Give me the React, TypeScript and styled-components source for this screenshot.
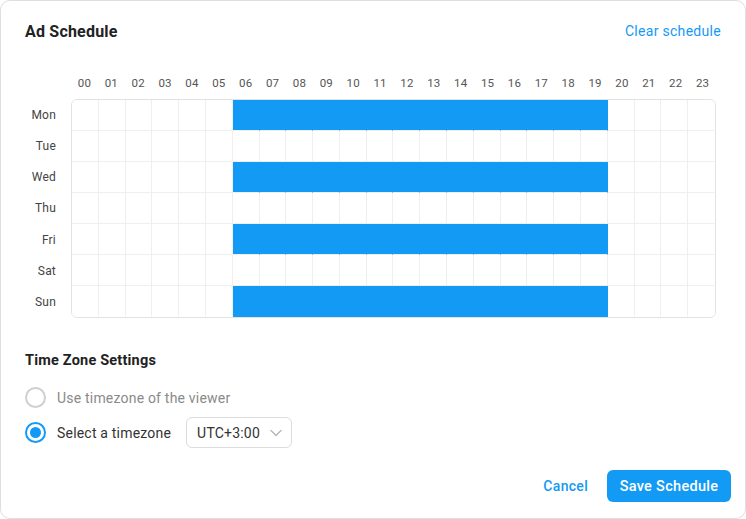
import React, {useState} from "react";
import styled, {createGlobalStyle} from "styled-components";

const GlobalStyle = createGlobalStyle`
  html, body {
    margin: 0;
    padding: 0;
    background: #ffffff;
    font-family: Roboto, "Noto Sans", Arial, sans-serif;
  }
  * { box-sizing: border-box; }
`;

const BLUE = "#139af5";

const Card = styled.div`
  width: 746px;
  height: 519px;
  border: 1px solid #dedede;
  border-radius: 10px;
  background: #fff;
  display: flex;
  flex-direction: column;
  padding: 19px 0 16px 24px;
  letter-spacing: 0.2px;
`;

const Header = styled.div`
  display: flex;
  justify-content: space-between;
  align-items: center;
  height: 22px;
  padding-right: 24px;
`;

const Title = styled.h2`
  margin: 0;
  font-size: 16px;
  font-weight: 700;
  color: #222;
  letter-spacing: 0.2px;
`;

const LinkButton = styled.button<{$bold?: boolean}>`
  border: none;
  background: none;
  padding: 0;
  font-family: inherit;
  font-size: 14px;
  letter-spacing: 0.3px;
  color: ${BLUE};
  cursor: pointer;
  font-weight: ${(p) => (p.$bold ? 500 : 400)};
`;

const Schedule = styled.div`
  margin-top: 33px;
  display: grid;
  grid-template-columns: 46px 645px;
  grid-template-rows: 16px 219px;
  row-gap: 8px;
`;

const Hours = styled.div`
  grid-column: 2;
  display: grid;
  grid-template-columns: repeat(24, 1fr);
`;

const HourLabel = styled.span`
  text-align: center;
  font-size: 11.5px;
  color: #555;
  line-height: 16px;
`;

const Days = styled.div`
  grid-column: 1;
  display: grid;
  grid-template-rows: repeat(7, 1fr);
  padding-right: 15px;
`;

const DayLabel = styled.span`
  display: flex;
  align-items: center;
  justify-content: flex-end;
  font-size: 12px;
  color: #444;
`;

const Grid = styled.div`
  grid-column: 2;
  display: grid;
  grid-template-columns: repeat(24, 1fr);
  grid-template-rows: repeat(7, 1fr);
  border: 1px solid #e2e2e2;
  border-radius: 6px;
  overflow: hidden;
`;

const Cell = styled.div<{$on: boolean; $lastCol: boolean; $lastRow: boolean}>`
  background: ${(p) => (p.$on ? BLUE : "#fff")};
  border-right: 1px solid ${(p) => (p.$lastCol ? "transparent" : p.$on ? BLUE : "#efefef")};
  border-bottom: 1px solid ${(p) => (p.$lastRow ? "transparent" : "#efefef")};
`;

const SectionTitle = styled.h3`
  margin: 34px 0 0;
  font-size: 14.5px;
  font-weight: 700;
  color: #222;
  line-height: 18px;
`;

const Options = styled.div`
  margin-top: 12px;
  display: flex;
  flex-direction: column;
  gap: 4px;
`;

const Option = styled.label<{$muted?: boolean}>`
  display: flex;
  align-items: center;
  height: 31px;
  font-size: 14px;
  color: ${(p) => (p.$muted ? "#8a8a8a" : "#333")};
  cursor: pointer;
`;

const Radio = styled.span<{$checked: boolean}>`
  width: 21px;
  height: 21px;
  border-radius: 50%;
  border: 2px solid ${(p) => (p.$checked ? BLUE : "#cfcfcf")};
  margin-right: 11px;
  display: flex;
  align-items: center;
  justify-content: center;
  &::after {
    content: "";
    width: 11px;
    height: 11px;
    border-radius: 50%;
    background: ${(p) => (p.$checked ? BLUE : "transparent")};
  }
`;

const Select = styled.div`
  margin-left: 15px;
  width: 106px;
  height: 31px;
  border: 1px solid #dcdcdc;
  border-radius: 6px;
  display: flex;
  align-items: center;
  justify-content: space-between;
  padding: 0 9px 0 10px;
  font-size: 14px;
  color: #333;
`;

const Footer = styled.div`
  margin-top: auto;
  display: flex;
  justify-content: flex-end;
  align-items: center;
  gap: 19px;
  padding-right: 14px;
`;

const PrimaryButton = styled.button`
  height: 32px;
  width: 124px;
  padding: 0;
  border: none;
  border-radius: 6px;
  background: ${BLUE};
  color: #fff;
  font-family: inherit;
  font-size: 14.5px;
  letter-spacing: 0.3px;
  font-weight: 500;
  cursor: pointer;
`;

const days = ["Mon", "Tue", "Wed", "Thu", "Fri", "Sat", "Sun"];
const hours = Array.from({length: 24}, (_, i) => String(i).padStart(2, "0"));

const initial = days.map((_, d) =>
    hours.map((_, h) => d % 2 === 0 && h >= 6 && h <= 19)
);

function App() {
    const [sel, setSel] = useState<boolean[][]>(initial);
    const [useViewer, setUseViewer] = useState(false);

    const toggle = (d: number, h: number) =>
        setSel((prev) => prev.map((row, i) => (i === d ? row.map((v, j) => (j === h ? !v : v)) : row)));

    return (
        <>
            <GlobalStyle/>
            <Card>
                <Header>
                    <Title>Ad Schedule</Title>
                    <LinkButton onClick={() => setSel(days.map(() => hours.map(() => false)))}>
                        Clear schedule
                    </LinkButton>
                </Header>
                <Schedule>
                    <Hours>
                        {hours.map((h) => <HourLabel key={h}>{h}</HourLabel>)}
                    </Hours>
                    <Days>
                        {days.map((d) => <DayLabel key={d}>{d}</DayLabel>)}
                    </Days>
                    <Grid>
                        {sel.map((row, d) =>
                            row.map((on, h) => (
                                <Cell
                                    key={`${d}-${h}`}
                                    $on={on}
                                    $lastCol={h === 23}
                                    $lastRow={d === 6}
                                    onClick={() => toggle(d, h)}
                                />
                            ))
                        )}
                    </Grid>
                </Schedule>
                <SectionTitle>Time Zone Settings</SectionTitle>
                <Options>
                    <Option $muted onClick={() => setUseViewer(true)}>
                        <Radio $checked={useViewer}/>
                        Use timezone of the viewer
                    </Option>
                    <Option onClick={() => setUseViewer(false)}>
                        <Radio $checked={!useViewer}/>
                        Select a timezone
                        <Select>
                            UTC+3:00
                            <svg width="12" height="8" viewBox="0 0 12 8" fill="none">
                                <path d="M1 1.5l5 5 5-5" stroke="#b5b5b5" strokeWidth="1.3"
                                      strokeLinecap="round" strokeLinejoin="round"/>
                            </svg>
                        </Select>
                    </Option>
                </Options>
                <Footer>
                    <LinkButton $bold>Cancel</LinkButton>
                    <PrimaryButton>Save Schedule</PrimaryButton>
                </Footer>
            </Card>
        </>
    );
}

export default App;
